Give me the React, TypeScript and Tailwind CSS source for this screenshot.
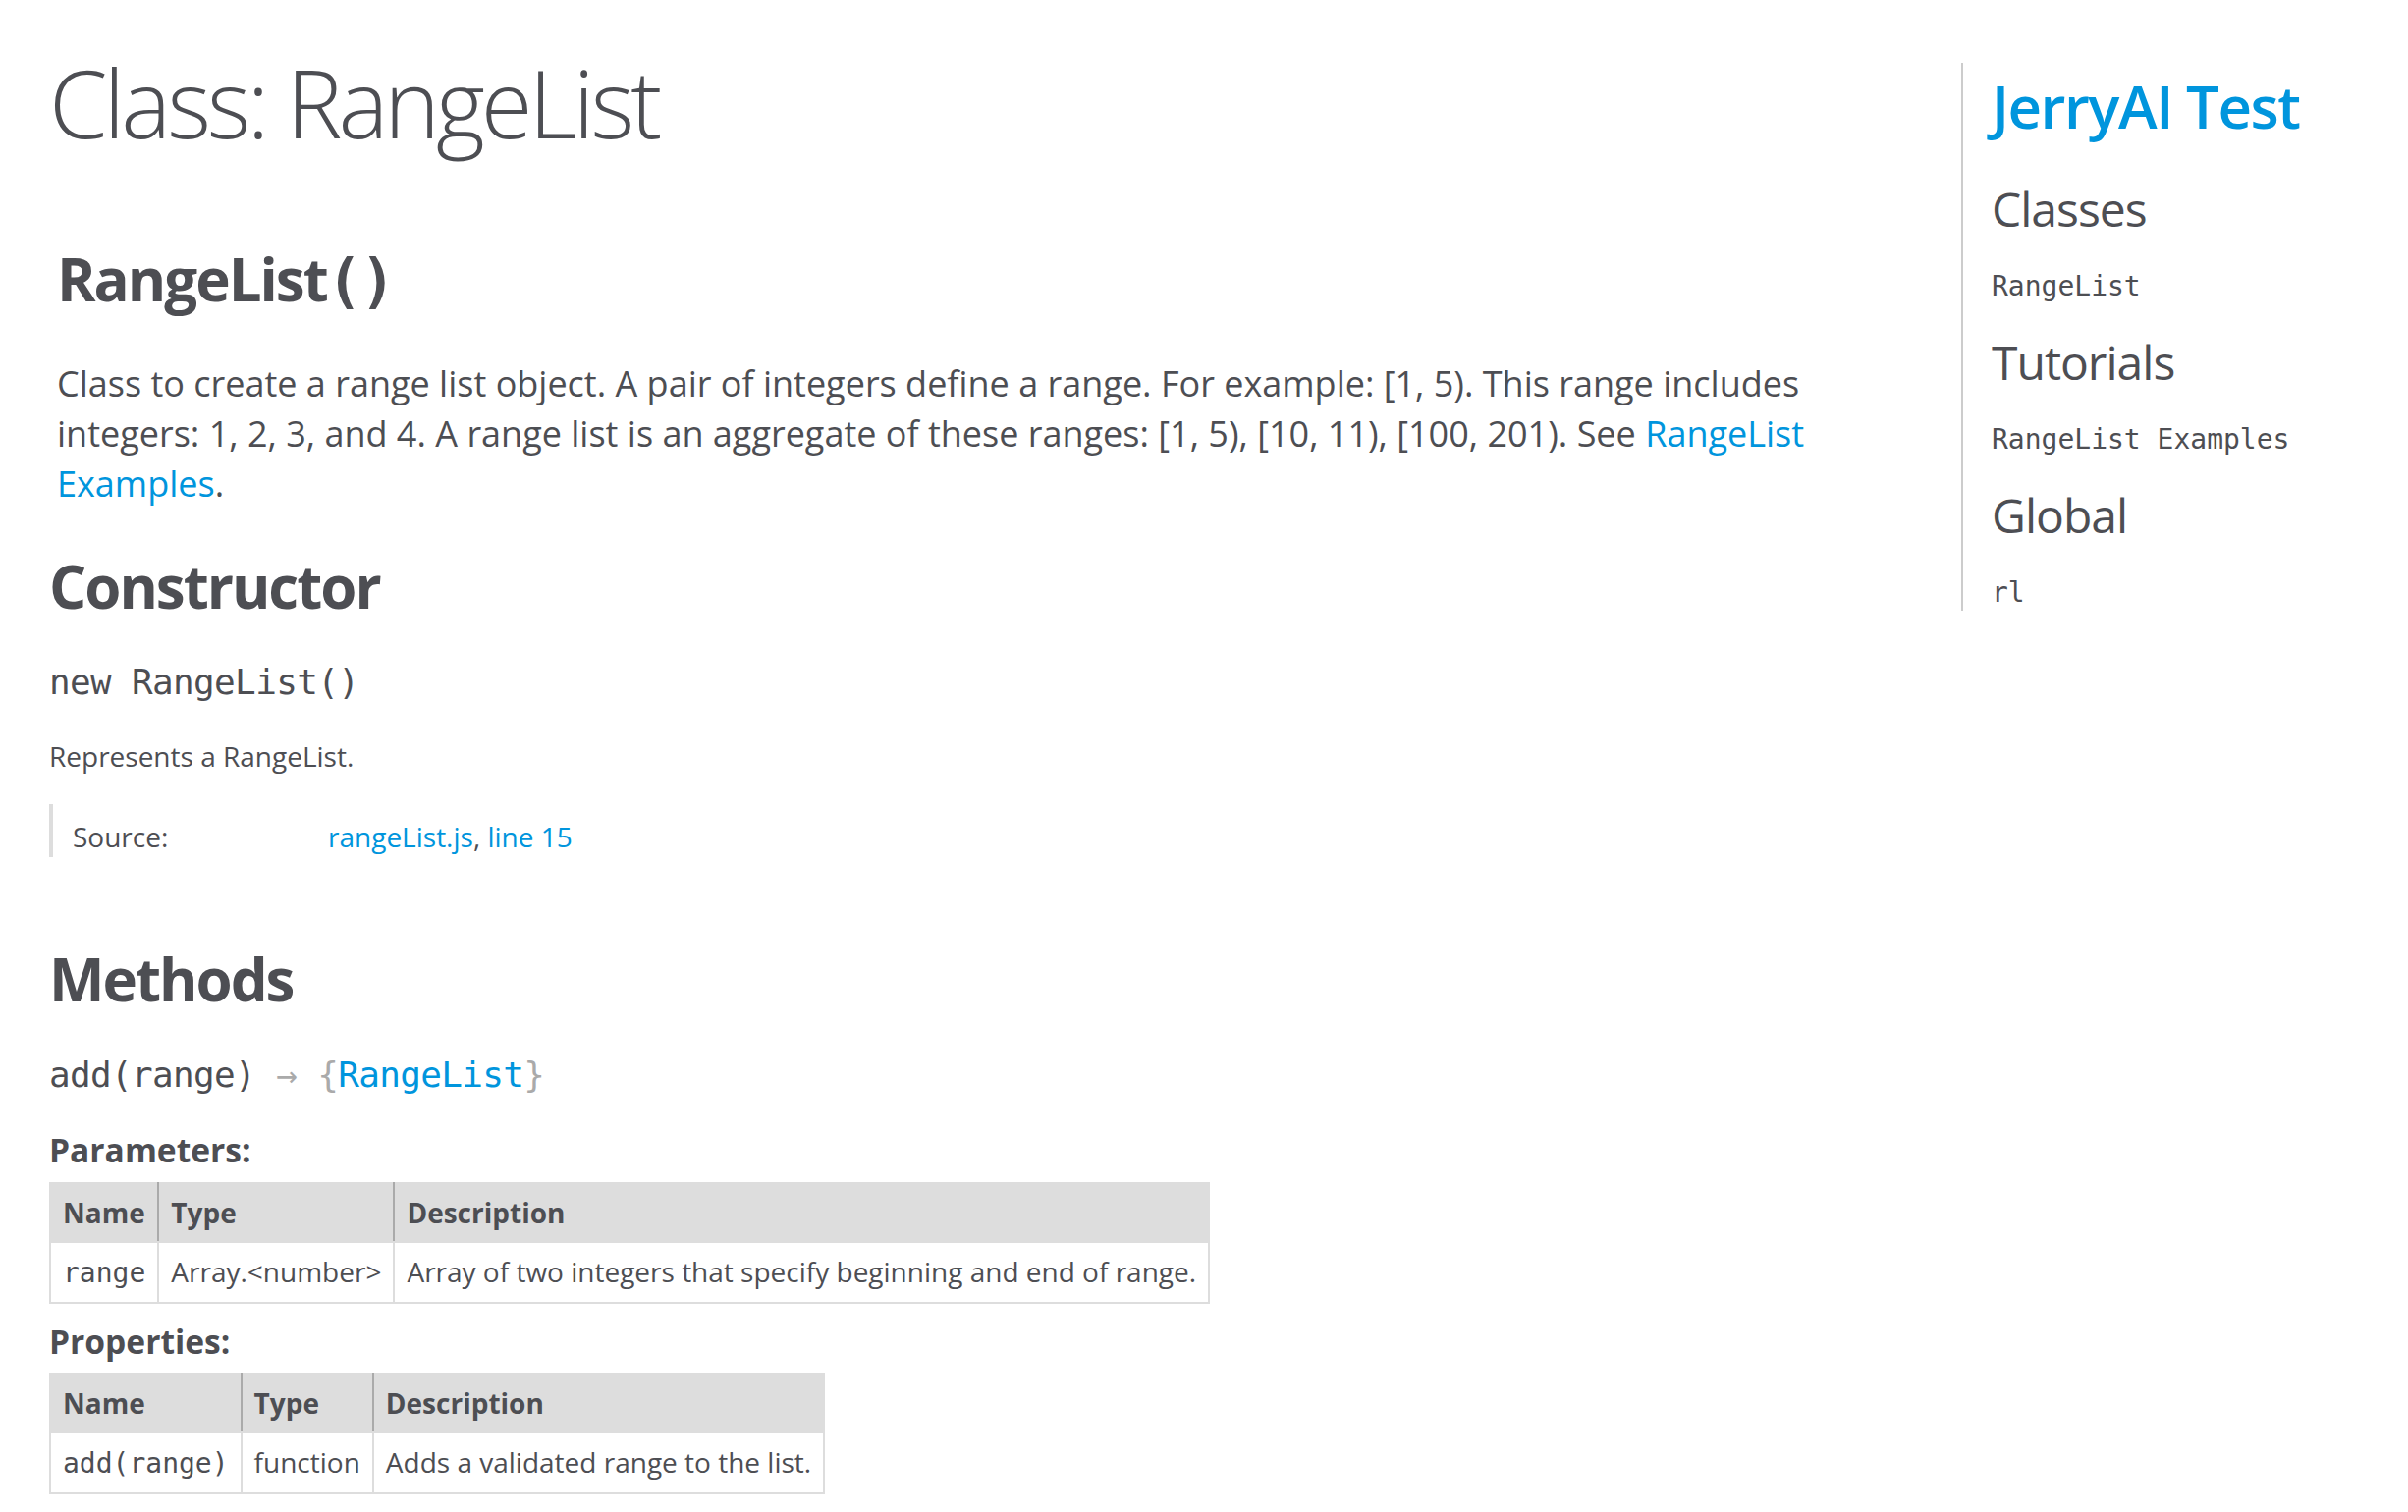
import React from "react";

const sans = "font-['Open_Sans',sans-serif]";
const mono = "font-['DejaVu_Sans_Mono',monospace]";

interface IRow {
  cells: React.ReactNode[];
}

const DocTable = ({ head, rows }: { head: string[]; rows: IRow[] }) => {
  return (
    <table className="border-collapse text-[28px] leading-[42px]">
      <thead>
        <tr className="bg-[#dddddd] font-bold">
          {head.map((h, i) => (
            <th
              key={i}
              className={`border-2 border-[#dddddd] px-[12px] py-[8px] text-left align-top ${
                i < head.length - 1 ? "border-r-[#aaaaaa]" : ""
              }`}
            >
              {h}
            </th>
          ))}
        </tr>
      </thead>
      <tbody>
        {rows.map((r, ri) => (
          <tr key={ri}>
            {r.cells.map((c, ci) => (
              <td
                key={ci}
                className="border-2 border-[#dddddd] px-[12px] py-[8px] text-left align-top"
              >
                {c}
              </td>
            ))}
          </tr>
        ))}
      </tbody>
    </table>
  );
};

const NavGroup = ({
  title,
  items,
  first,
}: {
  title: string;
  items: string[];
  first?: boolean;
}) => {
  return (
    <>
      <h3
        className={`${first ? "mt-[39px]" : "mt-[23px]"} text-[48px] font-normal leading-[72px] tracking-[-1px]`}
      >
        {title}
      </h3>
      <ul className="mt-[25px]">
        {items.map((e, index) => (
          <li key={index} className={`${mono} text-[28px] leading-[36px]`}>
            <a className="text-[#4d4e53]">{e}</a>
          </li>
        ))}
      </ul>
    </>
  );
};

export default function App() {
  return (
    <div className={`${sans} flex min-h-screen w-full bg-white text-[#4d4e53]`}>
      <div className="flex w-[1997px] shrink-0 flex-col pl-[50px]">
        <h1 className="mt-[32px] text-[96px] font-light leading-[144px] tracking-[-4px]">
          Class: RangeList
        </h1>

        <header className="flex w-[1840px] flex-col px-[8px]">
          <h2 className="mt-[63px] text-[60px] font-bold leading-[90px] tracking-[-2px]">
            RangeList<span className={mono}>()</span>
          </h2>
          <p className="mt-[34px] text-[36px] leading-[51px]">
            Class to create a range list object. A pair of integers define a
            range. For example: [1, 5). This range includes integers: 1, 2, 3,
            and 4. A range list is an aggregate of these ranges: [1, 5), [10,
            11), [100, 201). See{" "}
            <a className="text-[#0095dd]">RangeList Examples</a>.
          </p>
        </header>

        <h3 className="mt-[34px] text-[60px] font-bold leading-[90px] tracking-[-2px]">
          Constructor
        </h3>
        <h4 className={`${mono} mt-[26px] text-[36px] leading-[54px] tracking-[-0.66px]`}>
          new RangeList()
        </h4>
        <p className="mt-[27px] text-[28px] leading-[42px]">
          Represents a RangeList.
        </p>

        <dl className="mt-[28px] flex border-l-4 border-[#dddddd] text-[28px] leading-[42px]">
          <dt className="w-[280px] pl-[20px] pt-[12px]">Source:</dt>
          <dd className="pt-[12px]">
            <a className="text-[#0095dd]">rangeList.js</a>,{" "}
            <a className="text-[#0095dd]">line 15</a>
          </dd>
        </dl>

        <h3 className="mt-[79px] text-[60px] font-bold leading-[90px] tracking-[-2px]">
          Methods
        </h3>
        <h4 className={`${mono} mt-[26px] text-[36px] leading-[54px] tracking-[-0.66px]`}>
          add(range)
          <span className="text-[#aaaaaa]">
            {" "}
            → {"{"}
            <a className="text-[#0095dd]">RangeList</a>
            {"}"}
          </span>
        </h4>

        <h5 className="mt-[24px] text-[33.6px] font-bold leading-[50.4px]">
          Parameters:
        </h5>
        <div className="mt-[8px] flex">
          <DocTable
            head={["Name", "Type", "Description"]}
            rows={[
              {
                cells: [
                  <span className={mono}>range</span>,
                  "Array.<number>",
                  "Array of two integers that specify beginning and end of range.",
                ],
              },
            ]}
          />
        </div>

        <h5 className="mt-[13px] text-[33.6px] font-bold leading-[50.4px]">
          Properties:
        </h5>
        <div className="mt-[6px] flex">
          <DocTable
            head={["Name", "Type", "Description"]}
            rows={[
              {
                cells: [
                  <span className={mono}>add(range)</span>,
                  "function",
                  "Adds a validated range to the list.",
                ],
              },
            ]}
          />
        </div>
      </div>

      <nav className="mt-[64px] flex flex-1 flex-col self-start border-l-2 border-[#cccccc] pl-[29px]">
        <h2 className="mt-[14px] text-[60px] font-semibold leading-[60px] tracking-[-1.5px] text-[#0095dd]">
          JerryAI Test
        </h2>
        <NavGroup title="Classes" items={["RangeList"]} first />
        <NavGroup title="Tutorials" items={["RangeList Examples"]} />
        <NavGroup title="Global" items={["rl"]} />
      </nav>
    </div>
  );
}
